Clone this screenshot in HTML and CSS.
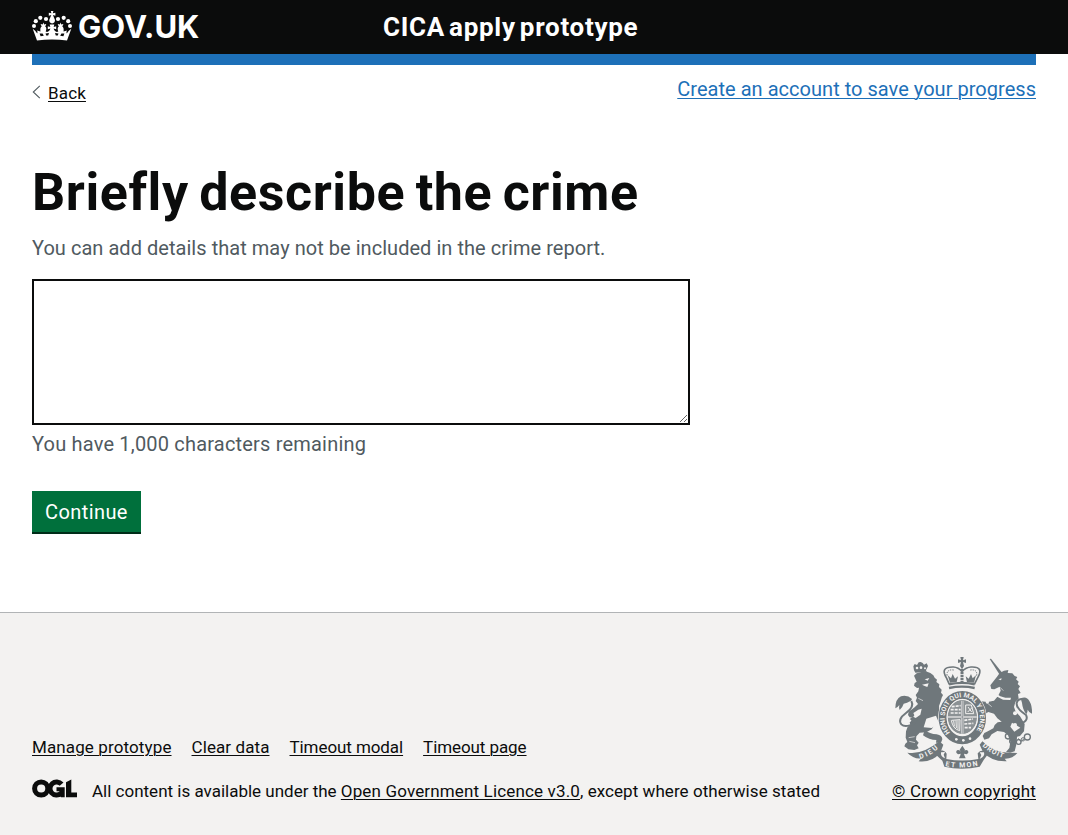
FILE: index.html
```
<!DOCTYPE html>
<html lang="en">
<head>
<meta charset="utf-8">
<title>Briefly describe the crime - CICA apply prototype</title>
<link rel="stylesheet" href="styles.css">
</head>
<body>
<header class="header">
  <div class="header-inner">
    <a class="logo" href="#">
      <svg class="crown" viewBox="0 0 40 30" width="40" height="30" aria-hidden="true">
        <g fill="#fff">
          <path d="M18.8 0h2.600l-.6 2.300 2.600-.6v3l-2.500-.7 2 4.800a2.900 2.900 0 1 1-5.600 0l2-4.800-2.500.7v-3l2.600.6z"/>
          <circle cx="14" cy="8" r="2.100"/><circle cx="26" cy="8" r="2.100"/>
          <circle cx="8.300" cy="6.800" r="2.100"/><circle cx="31.700" cy="6.800" r="2.100"/>
          <circle cx="3.800" cy="10.200" r="2.100"/><circle cx="36.200" cy="10.200" r="2.100"/>
          <circle cx="2" cy="15" r="2"/><circle cx="38" cy="15" r="2"/>
          <path d="M.7 17.800c1.800 1.200 3.300 2.500 4.400 4.700.7-.8.5-1.900-.2-3l3.600 1.100c-.4-2.200-.3-4 1.400-5.600-.8-.2-1.300-1-1.100-1.900l1.900.5.700-2.200.8 2.200 1.900-.5c.2.900-.3 1.700-1.100 2 1.700 1.300 1.600 3.700.7 5.500 2.300 1 4.200-.6 4.700-3l-2.600.7v-3l2.500.6-.6-2.400h4.600l-.6 2.400 2.500-.6v3l-2.600-.7c.5 2.400 2.400 4 4.700 3-.9-1.800-1-4.200.7-5.500-.8-.3-1.300-1.100-1.100-2l1.900.5.8-2.200.7 2.200 1.900-.5c.2.900-.3 1.700-1.100 1.900 1.700 1.600 1.800 3.400 1.400 5.600l3.600-1.100c-.7 1.100-.9 2.200-.2 3 1.100-2.200 2.600-3.500 4.400-4.700L35 29.500c-9.500-1.300-20.500-1.300-30 0z"/>
        </g>
        <g fill="#0b0c0c">
          <path d="M7.600 22.400l3 .2 1.200 2.200-3.200.5zM32.400 22.400l-3 .2-1.200 2.200 3.200.5zM13.500 22.400l3.500-.3-.8 2.300-2 .2zM26.500 22.400l-3.500-.3.8 2.300 2 .2z"/>
        </g>
      </svg>
      <span class="logotype">GOV.UK</span>
    </a>
    <a class="service" href="#">CICA apply prototype</a>
  </div>
</header>
<div class="container">
  <div class="topbar">
    <a class="back" href="#">
      <svg class="chevron" width="9" height="14" viewBox="0 0 9 14" aria-hidden="true"><path d="M7.800 .8 1.300 7l6.500 6.200" fill="none" stroke="#505a5f" stroke-width="1.100"/></svg>
      <span class="back-text">Back</span>
    </a>
    <a class="account" href="#">Create an account to save your progress</a>
  </div>
  <main class="main">
    <h1 class="title">Briefly describe the crime</h1>
    <p class="hint">You can add details that may not be included in the crime report.</p>
    <textarea class="textarea" aria-label="Briefly describe the crime"></textarea>
    <p class="count">You have 1,000 characters remaining</p>
    <button class="button">Continue</button>
  </main>
</div>
<footer class="footer">
  <div class="footer-inner">
    <div class="meta">
      <nav class="links">
        <a class="flink l1" href="#">Manage prototype</a>
        <a class="flink" href="#">Clear data</a>
        <a class="flink l3" href="#">Timeout modal</a>
        <a class="flink l3" href="#">Timeout page</a>
      </nav>
      <div class="licence">
        <svg class="ogl" width="46" height="19" viewBox="0 0 46 19" role="img" aria-label="OGL">
          <g fill="none" stroke="#0b0c0c" stroke-width="5">
            <circle cx="9.200" cy="9.500" r="6.600"/>
            <path d="M29.600 5.200A6.600 6.600 0 1 0 29 14.400"/>
          </g>
          <path d="M24.500 8.200h8.200v10h-3.800l-1.300-2-.3-4h-2.800zM34 3.200 39.300.4v13H45v4.900H34z" fill="#0b0c0c"/>
        </svg>
        <p class="licence-text"><span>All content is available under the </span><a class="ogl-link" href="#">Open Government Licence v3.0</a><span class="tail">, except where otherwise stated</span></p>
      </div>
    </div>
    <a class="copyright" href="#">
      <svg class="arms" width="141.700" height="115" viewBox="25 30 425 345" aria-hidden="true">
        <defs>
          <path id="garter" d="M196 263A53 62 0 1 1 270 263"/>
          <path id="dieu" d="M106 342Q140 333 168 303"/>
          <path id="mon" d="M182 363Q233 373 288 360"/>
          <path id="droit" d="M293 303Q322 331 364 341"/>
        </defs>
        <g fill="#6f777b">
          <!-- lion -->
          <path d="M86 64l4-7 7 3 5-8 6-1 6 3 4 5 8-4 4 8-6 13 2 4-34 3-4-7z"/>
          <path d="M88 92l8-7 14-4 13-2 14 5 9 7 4 7 7 6-2 7 9 7-1 8 8 8-2 9 6 7-4 8-3 11-5 14 2 22 10 13 12 18-1 22-13-16-11-11-14-12 2 20-9 14-16 9-20 1-10 11-1 10 8 9-5 8 5 9-13 5-18-2-12-9 3-8 6-5-5-13 1-19 5-14 8-5-2-8 17-12 15-11 4-18-10 3-15 10 3 7-5 7-9-1-5-7 2-10 18-13 10-10-7-9 4-10-4-8 8-11 2-11-6 1-9-7 2-8 6-4z"/>
          <path d="M100 222l-8 12-6-3-9 4 3-9-5-4 10-7z"/>
          <path d="M120 255q15 12 36 13 17 3 17 15l-4 10h-15l1-8q-22 0-40-14z"/>
          <path d="M82 162q-14-13-33-8-17 8-17 36 7-3 12-10-2 8 1 15 9-9 12-19 9-2 22-9z"/>
          <!-- unicorn -->
          <path d="M315 42l4-1 34 43-9 4z"/>
          <path d="M337 95l8-11 13-7 13-2-2 9 14 1 7 8 8 3-4 7 8 7-3 7 7 7-5 8 7 12-8 3 2 14-10 10-4 15 5 14 13 14 14 23-2 22-12 14-9 2-1 20-6 24-14 4-12-2 10-12 3-19-7-19-12-10-20-3-17 10-8 12-14 4-5-11 5-9 12-6 15-8 4-10 9-8 12-2-13-10-10-14-17-5-14 8-13 8-8-10 10-5 7-12-18-2-5-14-11-8 7-10 16 4 7 9 19 2 20-4 12-14 8-16-3-12-16 8-9-1-3-11z"/>
          <path d="M408 160q18-8 26 8 9 14 8 38-9-3-13-12 0 9-4 14-11-14-13-34z"/>
        </g>
        <g fill="none" stroke="#6f777b">
          <path d="M90 234q-28 16-40 4-12-15 14-34 26-18 16-36" stroke-width="6"/>
          <path d="M400 238q34-8 24-28-30-20-28-36 3-12 16-12" stroke-width="6"/>
          <path d="M401 280l8 9 10-8" stroke-width="3"/>
          <circle cx="370" cy="274" r="8" stroke-width="4"/><circle cx="382" cy="289" r="7" stroke-width="4"/>
          <circle cx="402" cy="291" r="7" stroke-width="4"/><circle cx="428" cy="276" r="9" stroke-width="4"/>
          <circle cx="415" cy="283" r="5" stroke-width="3"/>
        </g>
        <g fill="#f3f2f1">
          <circle cx="97" cy="69" r="4"/><circle cx="109" cy="68" r="4"/><circle cx="121" cy="70" r="3"/>
          <path d="M120 103l14-4-5 8zM112 119l20-4-4 11-8-3zM125 221l29-9 10 24-23 13-24-2z"/>
          <path d="M341 103l10-3-2 6zM323 142l13 5 11 7 15 4 17 0-2 7-22-1-16-8-16-7zM382 233l25 15-18 12-12-15z"/>
          <circle cx="322" cy="147" r="5"/><circle cx="391" cy="205" r="6"/><circle cx="391" cy="240" r="6"/><circle cx="308" cy="171" r="5"/>
        </g>
        <g fill="none" stroke="#f3f2f1" stroke-width="2">
          <path d="M101 160l14 7M346 127l10 10M74 289l17 4M72 278l18-3M309 175l12 10"/>
        </g>
        <!-- crown -->
        <g fill="none" stroke="#6f777b">
          <path d="M194 118l-8-18q-22-35 20-34 15 1 26 13 12-12 27-13 41-2 19 34l-9 18" stroke-width="5"/>
          <path d="M187 92q-2-20 20-17M276 92q3-20-19-17" stroke-width="3" stroke-dasharray="4 3"/>
          <path d="M232 72v42" stroke-width="9" stroke-dasharray="7 2"/>
          <path d="M193 118q39-9 77 0M193 129q39-8 77 0" stroke-width="7"/>
        </g>
        <g fill="#6f777b">
          <path d="M227 36h10l-2 10 9-3v11l-9-3 3 12-6 10-6-10 3-12-9 3V43l9 3z"/>
          <path d="M196 113l-7-22 10 9 5-13 7 14 9-7-4 17zM247 112l-4-18 9 7 7-14 5 13 10-9-6 22z"/>
          <!-- ribbons -->
          <path d="M68 323q44 8 96-34l12 10-9 24q-27 31-65 26l8-9q-23 3-42-17zM161 316q19-3 25 10l-1 16q47 9 96 0l-2-17q7-11 22-8l7 13-11 15-12 20q-54 12-106 0l-6-18-16-15zM293 289q39 38 89 34l16 1q-14 18-38 17l6 8q-47 2-72-30l-9-20z"/>
        </g>
        <g fill="#f3f2f1"><path d="M169 322l12-1-4 8 4 11q-14-5-12-18zM298 322l-13 0 5 8-5 12q17-8 13-20z"/></g>
        <!-- garter and shield -->
        <ellipse cx="233" cy="218" rx="73" ry="82" fill="#f3f2f1"/>
        <ellipse cx="233" cy="218" rx="59" ry="68" fill="none" stroke="#6f777b" stroke-width="24"/>
        <ellipse cx="233" cy="216" rx="44" ry="51" fill="#8b9194"/>
        <ellipse cx="233" cy="216" rx="46" ry="53" fill="none" stroke="#f3f2f1" stroke-width="2.500"/>
        <g stroke="#f3f2f1" fill="none">
          <path d="M233 167v99M190 216h86" stroke-width="6"/>
          <path d="M201 185l27-3M198 194l30 0M198 204l30 0M239 226l26-4M239 237l27-2M240 248l19 0" stroke-width="5" stroke-dasharray="9 3"/>
          <path d="M243 180h17l7 26h-24zM250 186l11 15M263 187l-14 14M200 226q4 26 25 31l1-33-25 2M207 227l2 17M214 226l1 23M220 226v27" stroke-width="3"/>
        </g>
        <path d="M233 167v99M190 216h86" stroke="#6f777b" stroke-width="2"/>
        <g class="motto">
          <text font-size="20"><textPath href="#garter" textLength="268">HONI SOIT QUI MAL Y PENSE</textPath></text>
          <text font-size="21"><textPath href="#dieu" textLength="64">DIEU</textPath></text>
          <text font-size="21"><textPath href="#mon" textLength="98">ET MON</textPath></text>
          <text font-size="21"><textPath href="#droit" textLength="72">DROIT</textPath></text>
        </g>
        <g fill="#f3f2f1"><circle cx="215" cy="283" r="4"/><circle cx="236" cy="286" r="4"/><circle cx="256" cy="281" r="4"/></g>
        <path d="M233 302l8 12-4 8q3-9 11-6 7 7-2 12l-8-2 1 5 4 9h-20l4-9 1-5-8 2q-9-5-3-12 8-3 12 6l-4-8z" fill="#6f777b"/>
      </svg>
      <span class="copy-text">© Crown copyright</span>
    </a>
  </div>
</footer>
</body>
</html>
```
FILE: styles.css
```
* { box-sizing: border-box; }
body { margin: 0; background: #fff; color: #0b0c0c; font-family: Roboto, "Liberation Sans", sans-serif; font-size: 20px; line-height: 26px; }
p, h1 { margin: 0; }
a { color: #0b0c0c; text-decoration-thickness: 1px; text-underline-offset: 2px; text-decoration-skip-ink: auto; }

.header { background: #0b0c0c; height: 54px; }
.header-inner { display: flex; align-items: flex-start; margin: 0 32px; padding-top: 11px; height: 65px; border-bottom: 11px solid #1d70b8; }
.logo { display: flex; width: 351px; text-decoration: none; }
.crown { display: block; flex: none; }
.logotype { margin-left: 6px; color: #fff; font-family: Inter, sans-serif; font-weight: 700; font-size: 31px; line-height: 32px; letter-spacing: 0; white-space: nowrap; }
.service { margin-top: 1px; color: #fff; font-weight: 700; font-size: 26px; line-height: 30px; letter-spacing: 0.7px; word-spacing: -3px; text-decoration: none; }

.container { margin: 11px 32px 0; }
.topbar { display: flex; justify-content: space-between; align-items: flex-start; padding-top: 11px; height: 100px; }
.back { display: flex; margin-top: 7px; gap: 7px; font-size: 17px; line-height: 20px; text-decoration: none; }
.chevron { display: block; margin-top: 2px; }
.back-text { letter-spacing: 0.15px; text-decoration: underline 1px; text-underline-offset: 2px; }
.account { color: #1d70b8; letter-spacing: 0.03px; }
.title { font-size: 52px; line-height: 56px; letter-spacing: 0.58px; word-spacing: -3px; }
.hint, .count { color: #505a5f; }
.hint { margin-top: 14px; letter-spacing: 0.04px; }
.textarea { display: block; width: 658px; height: 146px; margin-top: 18px; padding: 5px; border: 2px solid #0b0c0c; border-radius: 0; resize: vertical; font: inherit; }
.count { margin-top: 6px; letter-spacing: 0.19px; }
.button { display: block; width: 109px; height: 41px; margin-top: 34px; padding: 1px 0 0; border: 0; background: #00703c; box-shadow: 0 2px 0 #002d18; color: #fff; font: inherit; letter-spacing: 0.4px; }

.footer { margin-top: 80px; height: 223px; border-top: 1px solid #b1b4b6; background: #f3f2f1; font-size: 17px; line-height: 20px; }
.footer-inner { display: flex; justify-content: space-between; align-items: flex-end; margin: 0 32px; padding-top: 42px; }
.links { display: flex; gap: 20px; }
.flink { letter-spacing: 0.09px; }
.l1 { letter-spacing: 0.12px; }
.l3 { letter-spacing: -0.08px; }
.licence { display: flex; margin-top: 24px; }
.ogl { display: block; margin: -2px 14px 0 0; }
.licence-text { white-space: nowrap; }
.ogl-link { letter-spacing: 0.15px; }
.tail { letter-spacing: 0.06px; }
.copyright { display: flex; flex-direction: column; align-items: flex-end; text-decoration: none; }
.arms { display: block; margin-right: 1px; overflow: visible; }
.copy-text { margin-top: 11px; letter-spacing: 0.19px; text-decoration: underline 1px; text-underline-offset: 2px; }
.motto { fill: #f3f2f1; font-family: Roboto, sans-serif; font-weight: 700; }
```
